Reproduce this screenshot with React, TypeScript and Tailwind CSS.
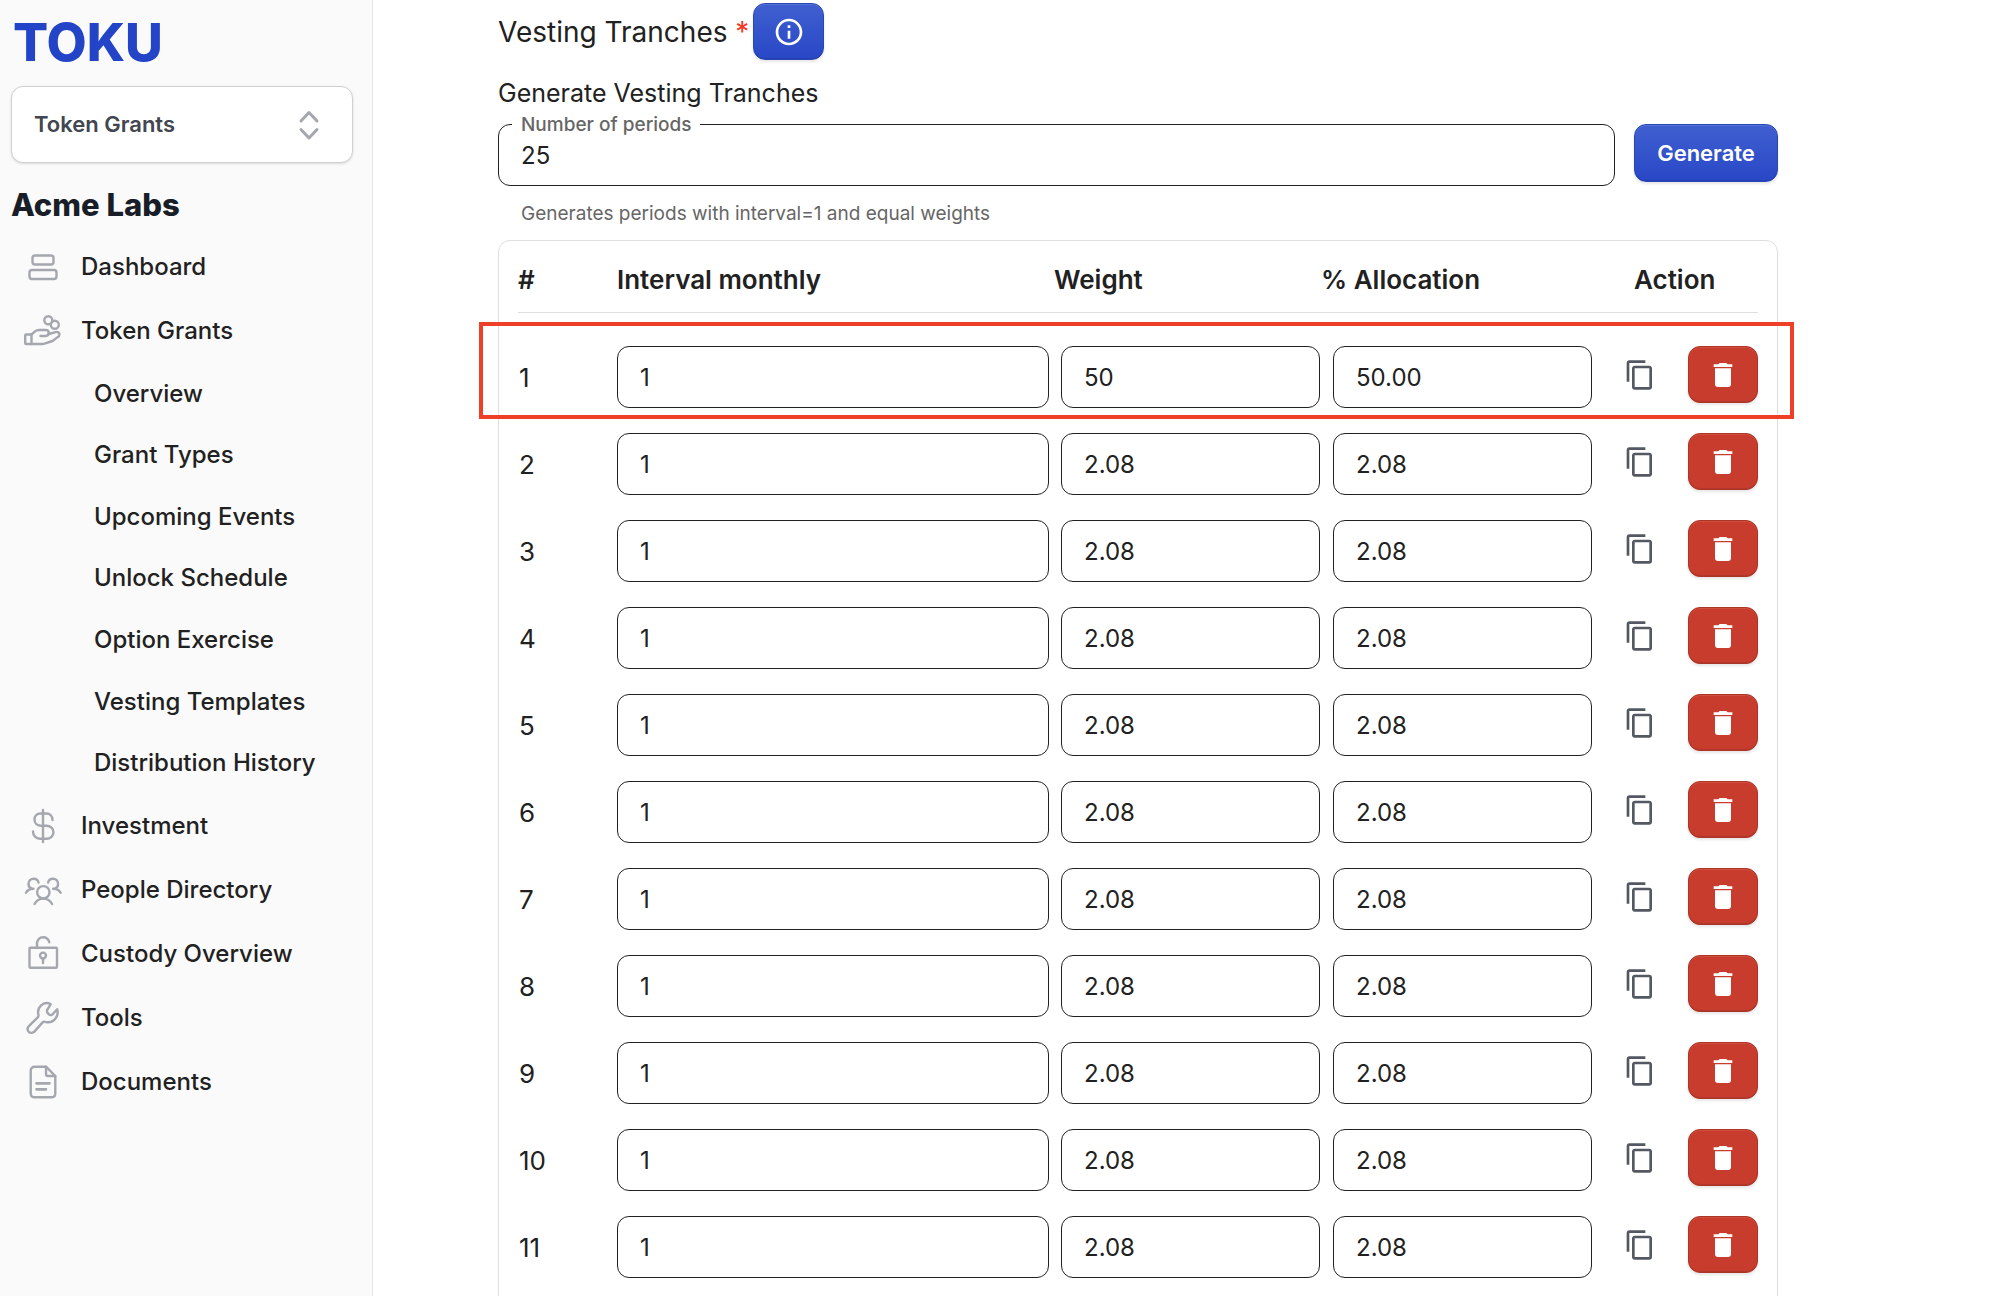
import React from 'react';
import { MdContentCopy, MdDelete, MdInfoOutline } from 'react-icons/md';

interface IconProps {
  children: React.ReactNode;
}

function NavIcon({ children }: IconProps) {
  return (
    <svg
      viewBox="0 0 36 36"
      className="h-9 w-9 shrink-0 overflow-visible text-[#a4a7ae]"
      fill="none"
      stroke="currentColor"
      strokeWidth="2.4"
      strokeLinecap="round"
      strokeLinejoin="round"
      aria-hidden="true"
    >
      {children}
    </svg>
  );
}

const DashboardIcon = (
  <NavIcon>
    <rect x="7.5" y="6.5" width="21" height="9" rx="2.5" />
    <rect x="4.5" y="21" width="27" height="9" rx="2.5" />
  </NavIcon>
);

const GrantsIcon = (
  <NavIcon>
    <circle cx="23.3" cy="7.3" r="4" />
    <circle cx="29.8" cy="11.7" r="4" />
    <path d="M6.5 21.5H1.2c-.6 0-1 .4-1 1V30c0 .6.4 1 1 1h5.3z" />
    <path d="M6.5 21.5 10 18.4c1.2-1 2.5-1.4 4-1.4h6.5c2 0 3.200 1 3.200 2.600 0 2-1.300 3.400-3.200 3.400H15.500" />
    <path d="m23.700 21 7-1.800c2-.5 3.800.4 3.800 2 0 1.500-.7 2.500-2.200 3.200L27.500 28l-8 2.600c-.8.300-1.500.400-2.300.400H6.500" />
  </NavIcon>
);

const InvestmentIcon = (
  <NavIcon>
    <path d="M18 2v32" />
    <path d="M27.5 12c0-4-2.5-6.5-6-6.5h-6c-3.5 0-6 2.5-6 6.1s2.5 6.1 6 6.1h6c4 0 7 2.8 7 6.5s-3 6.5-7 6.5H15c-4 0-7-3.2-7-7.2" />
  </NavIcon>
);

const PeopleIcon = (
  <NavIcon>
    <circle cx="18.3" cy="20.3" r="6.2" />
    <path d="M9.5 32c1.8-3.4 5-5.4 8.8-5.4s7 2 8.8 5.4" />
    <path d="M13.5 10.5C13 8.2 11 6.7 8.7 6.7 5.8 6.7 3.5 9 3.5 11.9c0 2.2 1.3 4.1 3.3 4.9" />
    <path d="M1 20.8c1.3-2.5 3.8-4 7.5-4" />
    <path d="M23.1 10.5c.5-2.3 2.5-3.8 4.8-3.8 2.9 0 5.2 2.3 5.2 5.2 0 2.2-1.3 4.1-3.3 4.9" />
    <path d="M35.6 20.8c-1.3-2.5-3.8-4-7.5-4" />
  </NavIcon>
);

const CustodyIcon = (
  <NavIcon>
    <rect x="4.5" y="11.7" width="27.5" height="20" rx="1" />
    <path d="M12 11.5v-4C12 4 14.6 1.300 18 1.300c3 0 5.500 2 6.300 5" />
    <circle cx="18" cy="19.6" r="3" />
    <path d="M18 22.7V27" />
  </NavIcon>
);

const ToolsIcon = (
  <NavIcon>
    <path d="M25.7 4.300c-3-1.700-7-1.300-9.800 1.300-2.700 2.600-3.400 5.500-2.500 9.200.3 1.200 0 2-.9 2.800l-8.400 8.200c-1.800 1.900-1.900 4.400-.4 6 1.600 1.600 4.200 1.500 5.900-.4l8-9c.8-.9 1.500-1 2.700-.6 3.500 1 7 .1 9.500-2.500 2.700-2.800 3.500-6.300 2.400-10l-5.200 5.600c-2.500.7-5.600-2-5-4.800z" />
  </NavIcon>
);

const DocumentsIcon = (
  <NavIcon>
    <path d="M21 2.700H9.800c-2.500 0-4.100 1.600-4.100 4.100v22.400c0 2.500 1.600 4.100 4.100 4.100h16.400c2.500 0 4.100-1.600 4.100-4.100V12z" />
    <path d="M21 2.700V10c0 1.200.8 2 2 2h7.300" />
    <path d="M11.500 19.300h13M11.500 25.300h9.500" strokeWidth="2.700" />
  </NavIcon>
);

const subItems = [
  'Overview',
  'Grant Types',
  'Upcoming Events',
  'Unlock Schedule',
  'Option Exercise',
  'Vesting Templates',
  'Distribution History',
];

const navItems = [
  { label: 'Dashboard', icon: DashboardIcon, children: [] as string[] },
  { label: 'Token Grants', icon: GrantsIcon, children: subItems },
  { label: 'Investment', icon: InvestmentIcon, children: [] },
  { label: 'People Directory', icon: PeopleIcon, children: [] },
  { label: 'Custody Overview', icon: CustodyIcon, children: [] },
  { label: 'Tools', icon: ToolsIcon, children: [] },
  { label: 'Documents', icon: DocumentsIcon, children: [] },
];

const tranches = Array.from({ length: 11 }, (_, i) => ({
  id: i + 1,
  interval: '1',
  weight: i === 0 ? '50' : '2.08',
  allocation: i === 0 ? '50.00' : '2.08',
}));

function Sidebar() {
  return (
    <aside className="w-[373px] shrink-0 border-r border-[#e4e5ea] bg-[#fafafa] pl-[11px] pr-[19px]">
      <div className="flex h-[86px] items-center pl-0.5 text-[52px] font-extrabold leading-none text-[#2444c8]">
        TOKU
      </div>

      <div className="relative">
        <select
          aria-label="Product"
          className="h-[77px] w-full appearance-none rounded-xl border border-[#d0d0d2] bg-white px-[22px] text-[22px] font-semibold text-[#414651] shadow-sm"
        >
          <option>Token Grants</option>
        </select>
        <svg
          viewBox="0 0 24 32"
          className="pointer-events-none absolute right-8 top-1/2 h-8 w-6 -translate-y-1/2 text-[#a4a7ae]"
          fill="none"
          stroke="currentColor"
          strokeWidth="3"
          strokeLinecap="round"
          strokeLinejoin="round"
          aria-hidden="true"
        >
          <path d="m4 12 8-8.500 8 8.500M4 20.500l8 8.500 8-8.500" />
        </svg>
      </div>

      <h2 className="mt-6 text-[31px] font-extrabold leading-9 text-[#181d27]">Acme Labs</h2>

      <nav className="mt-3">
        <ul>
          {navItems.map((item) => (
            <li key={item.label}>
              <a href="#" className="flex h-16 items-center gap-5 pl-[14px] text-2xl font-medium">
                {item.icon}
                {item.label}
              </a>
              {item.children.length > 0 && (
                <ul className="grid h-[431px] auto-rows-fr pl-[83px] text-2xl font-medium">
                  {item.children.map((child) => (
                    <li key={child} className="flex items-center">
                      <a href="#">{child}</a>
                    </li>
                  ))}
                </ul>
              )}
            </li>
          ))}
        </ul>
      </nav>
    </aside>
  );
}

interface CellInputProps {
  label: string;
  value: string;
}

function CellInput({ label, value }: CellInputProps) {
  return (
    <input
      aria-label={label}
      defaultValue={value}
      className="block h-[62px] w-full rounded-xl border border-[#212121] bg-white px-[22px] text-2xl"
    />
  );
}

function TrancheTable() {
  return (
    <div className="mt-[14px] rounded-xl border border-[#dedede] px-[19px] pb-8">
      <table className="w-full table-fixed border-separate border-spacing-0 text-left">
        <colgroup>
          <col className="w-[99px]" />
          <col />
          <col className="w-[267px]" />
          <col className="w-[313px]" />
          <col className="w-[124px]" />
        </colgroup>
        <thead>
          <tr className="h-[72px] text-[26px] leading-8">
            <th className="border-b border-[#dedede] pt-1.5 font-semibold">#</th>
            <th className="border-b border-[#dedede] pt-1.5 font-semibold">Interval monthly</th>
            <th className="border-b border-[#dedede] pt-1.5 font-semibold">Weight</th>
            <th className="border-b border-[#dedede] pt-1.5 font-semibold">% Allocation</th>
            <th className="border-b border-[#dedede] pt-1.5 font-semibold">Action</th>
          </tr>
        </thead>
        <tbody className="before:block before:h-2 before:content-['']">
          {tranches.map((t) => (
            <tr key={t.id} className="relative align-top">
              <td className="pt-[25px] text-[26px] leading-[64px]">
                <div className="h-[62px] pl-px">{t.id}</div>
                {t.id === 1 && (
                  <div className="pointer-events-none absolute -bottom-[11px] -left-[39px] -right-9 top-px border-4 border-[#ee4027]" />
                )}
              </td>
              <td className="pr-[5px] pt-[25px]">
                <CellInput label={`Interval ${t.id}`} value={t.interval} />
              </td>
              <td className="pl-[7px] pr-px pt-[25px]">
                <CellInput label={`Weight ${t.id}`} value={t.weight} />
              </td>
              <td className="pl-3 pr-[42px] pt-[25px]">
                <CellInput label={`Allocation ${t.id}`} value={t.allocation} />
              </td>
              <td className="pt-[25px]">
                <div className="-ml-2.5 flex items-center justify-between">
                  <button aria-label="Duplicate" className="text-[#535862]">
                    <MdContentCopy className="h-8 w-8" />
                  </button>
                  <button
                    aria-label="Delete"
                    className="flex h-[57px] w-[70px] items-center justify-center rounded-xl border border-[#ad3427] bg-[#c73c2d] text-white shadow-[inset_0_1px_0_#d0503f,inset_0_-1px_0_#b0382a,0_2px_3px_#0000001a]"
                  >
                    <MdDelete className="h-8 w-8" />
                  </button>
                </div>
              </td>
            </tr>
          ))}
        </tbody>
      </table>
    </div>
  );
}

export default function App() {
  return (
    <div className="flex h-screen overflow-hidden bg-white font-['Inter',sans-serif] text-[#212121]">
      <Sidebar />
      <main className="min-w-0 flex-1 pl-[125px] pr-6">
        <div className="max-w-[1280px]">
          <div className="flex items-center gap-1 pt-[3px]">
            <h1 className="text-[28px] leading-9">
              Vesting Tranches <span className="text-[#f03a25]">*</span>
            </h1>
            <button
              aria-label="About vesting tranches"
              className="flex h-[57px] w-[71px] items-center justify-center rounded-xl border border-[#2a46b4] bg-linear-to-b from-[#3f5fd0] to-[#2947c6] text-white shadow-[inset_0_1px_0_#5572d6,inset_0_-1px_0_#2440b4,0_2px_3px_#0000001a]"
            >
              <MdInfoOutline className="h-8 w-8" />
            </button>
          </div>

          <h2 className="mt-[17px] text-[25px] leading-8">Generate Vesting Tranches</h2>

          <div className="mt-[15px] flex items-start gap-[19px]">
            <div className="min-w-0 flex-1">
              <div className="relative">
                <label
                  htmlFor="periods"
                  className="absolute -top-[11px] left-[14px] bg-white px-[9px] text-[19px] font-medium leading-6 text-[#666666]"
                >
                  Number of periods
                </label>
                <input
                  id="periods"
                  defaultValue="25"
                  className="block h-[62px] w-full rounded-xl border border-[#212121] px-[22px] text-2xl"
                />
              </div>
              <p className="mt-4 pl-[23px] text-[19px] leading-6 text-[#666666]">
                Generates periods with interval=1 and equal weights
              </p>
            </div>
            <button className="h-[58px] w-36 rounded-xl border border-[#2a46b4] bg-linear-to-b from-[#3f5fd0] to-[#2947c6] text-[22px] font-semibold text-white shadow-[inset_0_1px_0_#5572d6,inset_0_-1px_0_#2440b4,0_2px_3px_#0000001a]">
              Generate
            </button>
          </div>

          <TrancheTable />
        </div>
      </main>
    </div>
  );
}
